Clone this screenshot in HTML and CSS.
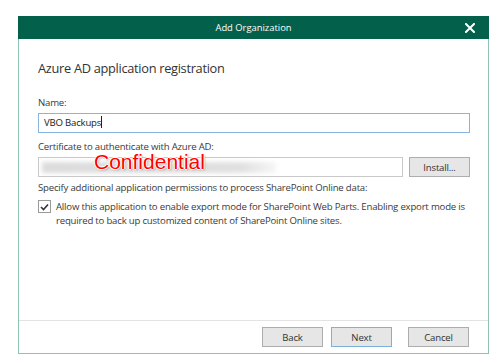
FILE: index.html
```html
<!DOCTYPE html>
<html lang="en">
<head>
    <meta charset="UTF-8">
    <title>Add Organization</title>
    <link rel="stylesheet" href="styles.css">
</head>
<body>
    <div class="dialog">
        <!-- Title bar -->
        <div class="titlebar">
            <span class="title">Add Organization</span>
            <svg class="close" width="10" height="10" viewBox="0 0 10 10">
                <path d="M1 1 L9 9 M9 1 L1 9" stroke="#ffffff" stroke-width="2" stroke-linecap="square"/>
            </svg>
        </div>

        <!-- Main content -->
        <div class="content">
            <h1>Azure AD application registration</h1>

            <label class="field-label">Name:</label>
            <div class="input focused">VBO Backups<span class="caret"></span></div>

            <label class="field-label">Certificate to authenticate with Azure AD:</label>
            <div class="cert-row">
                <div class="input cert">
                    <div class="blur"></div>
                    <span class="stamp">Confidential</span>
                </div>
                <div class="btn install">Install...</div>
            </div>

            <p class="field-label">Specify additional application permissions to process SharePoint Online data:</p>
            <div class="check-row">
                <span class="checkbox">
                    <svg width="9" height="8" viewBox="0 0 9 8">
                        <path d="M1 4 L3.5 6.5 L8 1.5" fill="none" stroke="#333" stroke-width="1.6"/>
                    </svg>
                </span>
                <span class="check-text">Allow this application to enable export mode for SharePoint Web Parts. Enabling export mode is required to back up customized content of SharePoint Online sites.</span>
            </div>
        </div>

        <!-- Footer -->
        <div class="footer">
            <div class="btn">Back</div>
            <div class="btn default">Next</div>
            <div class="btn cancel">Cancel</div>
        </div>
    </div>
</body>
</html>
```

FILE: styles.css
```css
* {
    margin: 0;
    padding: 0;
    box-sizing: border-box;
}
body {
    font-family: 'Open Sans', 'Noto Sans', sans-serif;
    font-size: 9.6px;
    letter-spacing: -0.2px;
    color: #3a3a3a;
    background-color: #ffffff;
    padding: 16px 0 0 18px;
}
.dialog {
    width: 471px;
    height: 338px;
    border: 1px solid #8fc2b5;
    border-top: none;
    display: flex;
    flex-direction: column;
    background-color: #ffffff;
}
/* Title bar */
.titlebar {
    height: 23px;
    margin: 0 -1px;
    background-color: #02604b;
    color: #ffffff;
    position: relative;
    display: flex;
    align-items: center;
    justify-content: center;
}
.title {
    font-size: 9.4px;
    letter-spacing: 0;
}
.close {
    position: absolute;
    right: 14px;
    top: 7px;
}
/* Content */
.content {
    flex: 1;
    padding: 21px 18px 0 19px;
}
h1 {
    font-size: 12.8px;
    letter-spacing: -0.3px;
    line-height: 17px;
    font-weight: normal;
    color: #333;
    margin-bottom: 19px;
}
.field-label {
    display: block;
    line-height: 14px;
    margin-bottom: 3px;
}
.input {
    height: 20px;
    border: 1px solid #c9c9c9;
    padding: 0 5px;
    line-height: 18px;
    margin-bottom: 7px;
    color: #222;
}
.input.focused {
    border-color: #86b6e0;
}
.caret {
    display: inline-block;
    width: 1px;
    height: 12px;
    background-color: #222;
    vertical-align: -2px;
}
.cert-row {
    display: flex;
    gap: 6px;
    margin-bottom: 4px;
}
.cert {
    flex: 1;
    position: relative;
    margin-bottom: 0;
}
.blur {
    margin: 4px 0 0 -2px;
    width: 234px;
    height: 11px;
    background: linear-gradient(to right, #dcdcdc, #e0e0e0 85%, #f6f6f6);
    filter: blur(2px);
}
.stamp {
    position: absolute;
    left: 55px;
    top: -5px;
    font-family: 'Liberation Sans', Arial, sans-serif;
    font-size: 21px;
    letter-spacing: 0;
    color: #ff0000;
    text-shadow: 1px 0 0 #fff, -1px 0 0 #fff, 0 1px 0 #fff, 0 -1px 0 #fff, 1px 1px 2px #888;
}
.btn {
    width: 61px;
    height: 20px;
    border: 1px solid #adadad;
    background-color: #e6e6e6;
    display: flex;
    align-items: center;
    justify-content: center;
    color: #333;
}
.check-row {
    display: flex;
    gap: 5px;
    margin-top: 5px;
}
.checkbox {
    width: 13px;
    height: 13px;
    border: 1px solid #9a9a9a;
    display: flex;
    align-items: center;
    justify-content: center;
    flex-shrink: 0;
}
.check-text {
    line-height: 14px;
}
/* Footer */
.footer {
    height: 33px;
    border-top: 1px solid #e3e3e3;
    display: flex;
    justify-content: flex-end;
    align-items: flex-start;
    padding: 6px 19px 0 0;
    gap: 8px;
}
.btn.default {
    border-color: #7cb1de;
}
.btn.cancel {
    margin-left: 8px;
}
```
